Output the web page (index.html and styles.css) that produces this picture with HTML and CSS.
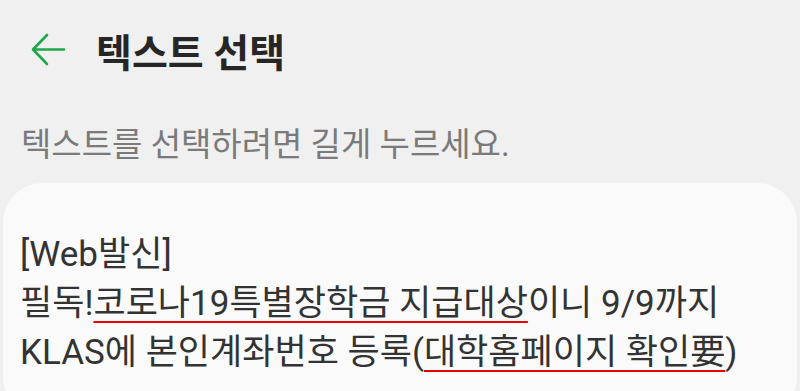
FILE: index.html
```html
<!DOCTYPE html>
<html lang="ko">
<head>
    <meta charset="UTF-8">
    <meta name="viewport" content="width=device-width, initial-scale=1.0">
    <title>텍스트 선택</title>
    <link rel="stylesheet" href="styles.css">
</head>
<body>
    <div class="header">
        <svg class="back" width="36" height="36" viewBox="0 0 36 36">
            <path d="M34 17.5H3M17 3L3 17.5L17 32" fill="none" stroke="#1ea84c" stroke-width="2.6" stroke-linecap="round" stroke-linejoin="round"/>
        </svg>
        <h1 class="title">텍스트 선택</h1>
    </div>
    <p class="hint">텍스트를 선택하려면 길게 누르세요.</p>
    <div class="card">
        <p class="message">[Web발신]<br>필독!<span class="mark">코로나19특별장학금 지급대상</span>이니 9/9까지<br>KLAS에 본인계좌번호 등록(<span class="mark">대학홈페이지 확인要</span>)</p>
    </div>
</body>
</html>
```

FILE: styles.css
```css
body {
    margin: 0;
    background-color: #f0f0f0;
    font-family: Roboto, "Noto Sans CJK KR", sans-serif;
    overflow: hidden;
}
.header {
    display: flex;
    align-items: center;
    gap: 30px;
    height: 100px;
    padding-left: 30px;
}
.back {
    display: block;
}
.title {
    margin: 0;
    font-size: 39px;
    font-weight: bold;
    color: #262626;
}
.hint {
    margin: 21px 0 0 21px;
    font-size: 33px;
    color: #7a7a7a;
    line-height: 48px;
}
.card {
    margin: 14px 3px 0 3px;
    background: #fafafa;
    border-radius: 40px;
    padding: 47px 17px 40px 17px;
}
.message {
    margin: 0;
    font-size: 35px;
    line-height: 49px;
    color: #333;
}
.mark {
    text-decoration: underline;
    text-decoration-color: #e60000;
    text-decoration-thickness: 2px;
    text-underline-offset: 6px;
}
```
